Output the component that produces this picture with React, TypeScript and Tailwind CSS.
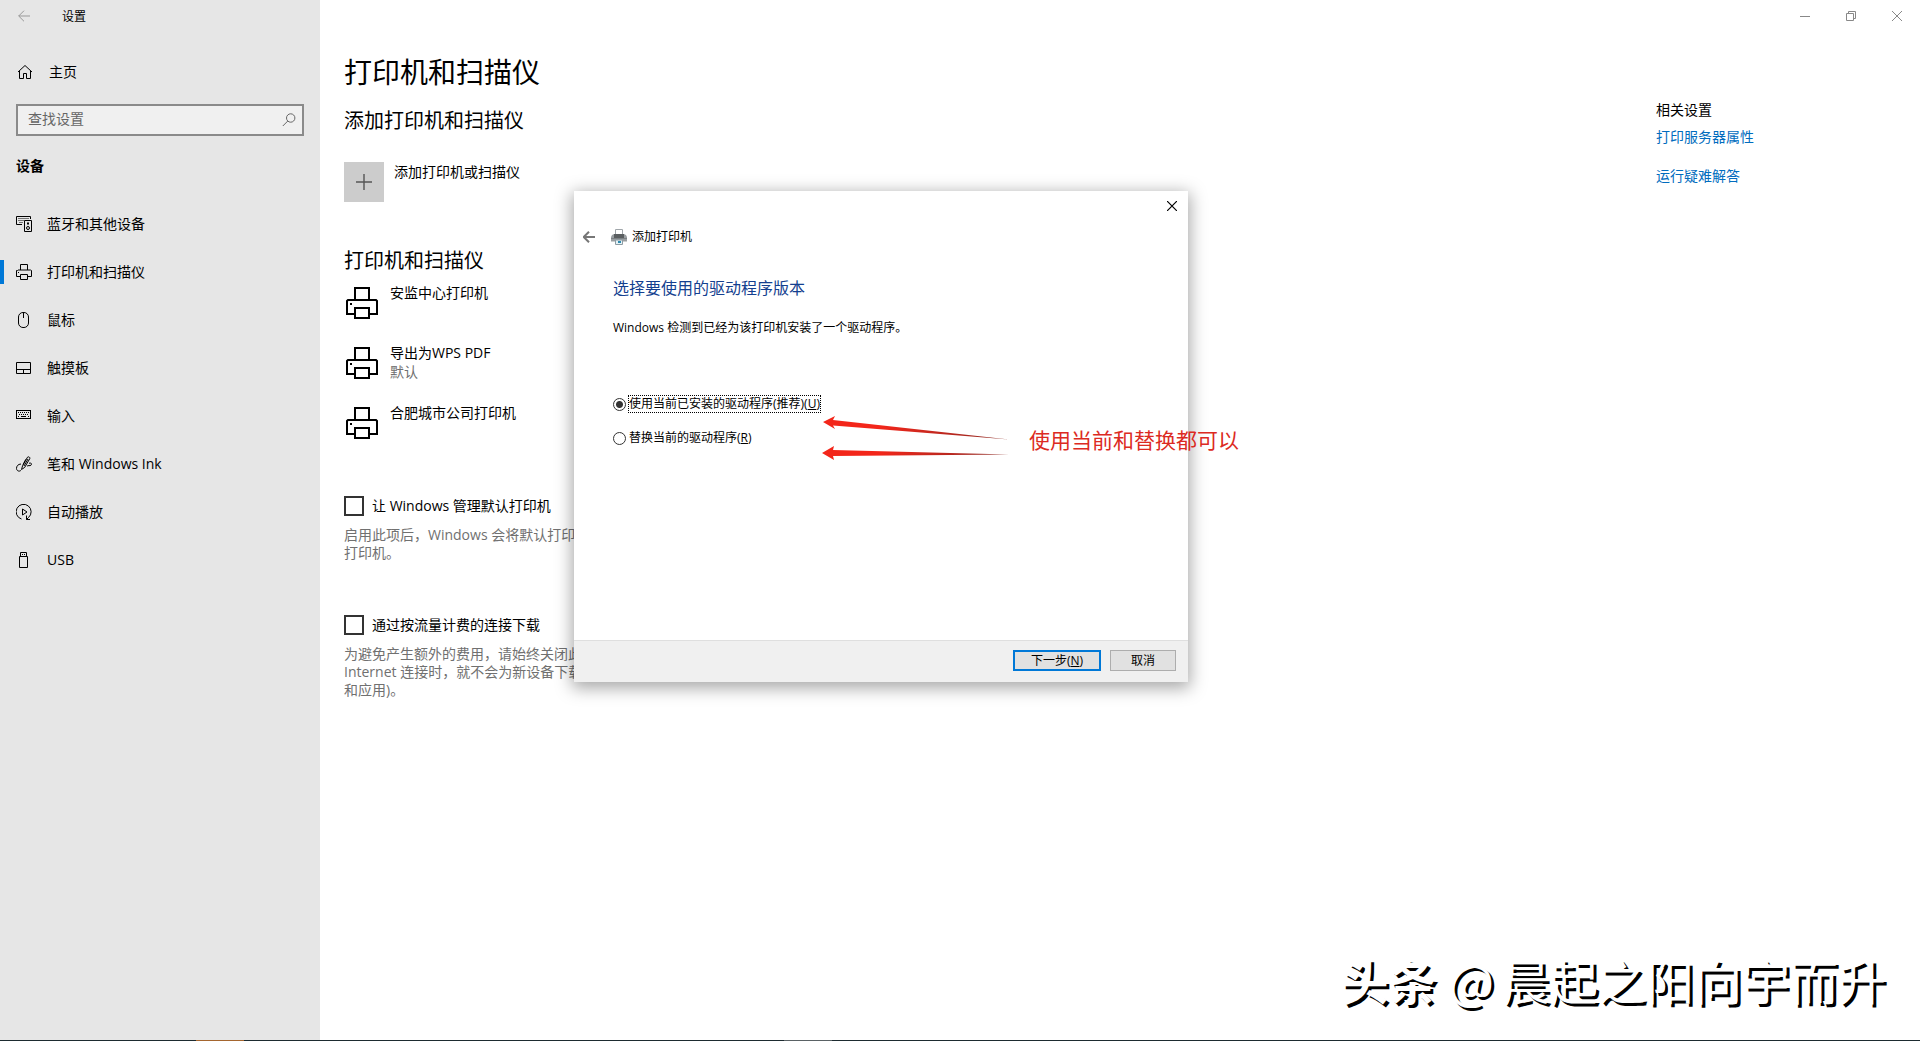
import type { ReactNode } from 'react'

interface NavItem {
  id:      string
  label:   string
  icon:    ReactNode
  active?: boolean
}

interface Printer {
  name:    string
  status?: string
}

const NAV_ITEMS: NavItem[] = [
  { id: 'bluetooth', label: '蓝牙和其他设备', icon: <DevicesIcon /> },
  { id: 'printers',  label: '打印机和扫描仪', icon: <SmallPrinterIcon />, active: true },
  { id: 'mouse',     label: '鼠标', icon: <MouseIcon /> },
  { id: 'touchpad',  label: '触摸板', icon: <TouchpadIcon /> },
  { id: 'typing',    label: '输入', icon: <KeyboardIcon /> },
  { id: 'pen',       label: '笔和 Windows Ink', icon: <PenIcon /> },
  { id: 'autoplay',  label: '自动播放', icon: <AutoplayIcon /> },
  { id: 'usb',       label: 'USB', icon: <UsbIcon /> },
]

const PRINTERS: Printer[] = [
  { name: '安监中心打印机' },
  { name: '导出为WPS PDF', status: '默认' },
  { name: '合肥城市公司打印机' },
]

/* ---------- icons ---------- */

function Icon16({ children }: { children: ReactNode }) {
  return (
    <svg viewBox="0 0 16 16" className="w-4 h-4 shrink-0" fill="none" stroke="currentColor" aria-hidden="true">
      {children}
    </svg>
  )
}

function ArrowIcon({ width = 1 }: { width?: number }) {
  return (
    <svg viewBox="0 0 12 12" className="w-3 h-3" fill="none" stroke="currentColor" strokeWidth={width} aria-hidden="true">
      <path d="M0.7 6H12M6 0.7 0.7 6 6 11.3" />
    </svg>
  )
}

function HomeIcon() {
  return (
    <Icon16>
      <path d="M1 8 8 1.5 15 8M2.5 7V14.5H6.5V9.5H9.5V14.5H13.5V7" />
    </Icon16>
  )
}

function SearchIcon() {
  return (
    <svg viewBox="0 0 14 14" className="w-3.5 h-3.5 shrink-0" fill="none" stroke="currentColor" aria-hidden="true">
      <circle cx="8.7" cy="5" r="4.2" />
      <path d="M5.8 8 0.8 13" />
    </svg>
  )
}

function DevicesIcon() {
  return (
    <Icon16>
      <path d="M6 8.5H0.5V0.5H14.5V3" />
      <path d="M2.5 2.5H13M2.5 4.5H8M3.5 6.5H7" strokeDasharray="1 1" />
      <path d="M8.5 4.5H15.5V15.5H8.5Z" />
      <circle cx="12" cy="12" r="1.5" />
      <path d="M11 7.5H13M12 6V9" />
    </Icon16>
  )
}

function SmallPrinterIcon() {
  return (
    <Icon16>
      <path d="M4.5 6V0.5H11.5V6M4.5 12.5H0.5V6.5H1.5L2 6H14.5L15.5 6.5V12.5H11.5" />
      <path d="M4.5 10.5H11.5V15.5H4.5ZM2 8.5H3" />
    </Icon16>
  )
}

function MouseIcon() {
  return (
    <Icon16>
      <rect x="2.5" y="0.5" width="10" height="15" rx="4.5" />
      <path d="M7.5 0.5V6" />
    </Icon16>
  )
}

function TouchpadIcon() {
  return (
    <Icon16>
      <path d="M0.5 2.5H14.5V13.5H0.5ZM0.5 9.5H14.5M7.5 9.5V13.5" />
    </Icon16>
  )
}

function KeyboardIcon() {
  return (
    <Icon16>
      <rect x="0.5" y="2.5" width="14" height="8" />
      <path d="M2 4.5H13M3 6.5H13" strokeDasharray="1 1" />
      <path d="M2 8.5H3M5 8.5H10M12 8.5H13" />
    </Icon16>
  )
}

function PenIcon() {
  return (
    <Icon16>
      <path d="M5.5 13.5 6.5 10 11.5 1.2C12.3 0.2 14.4 1.3 13.8 2.6L8.7 11.4Z" />
      <path d="M12 3 8 10M9.8 3.3 7 8.5" />
      <path d="M5 8C2 8.2 0.5 10 0.5 12.5C0.6 15 3.5 16 5 14.2" />
      <path d="M13 7.2C15.5 6.6 16 8 15 9.2C14 10.2 12 9 11 10.2" />
    </Icon16>
  )
}

function AutoplayIcon() {
  return (
    <Icon16>
      <path d="M5.5 15A7.5 7.5 0 1 1 12.5 13.5L10.5 15.5M10.5 11.5V15.5H14" />
      <path d="M6.5 5V11L11 8Z" />
    </Icon16>
  )
}

function UsbIcon() {
  return (
    <Icon16>
      <path d="M3.5 4.5H11.5V15.5H3.5ZM4.5 4.5V0.5H10.5V4.5M6 2.5H7M8 2.5H9" />
    </Icon16>
  )
}

function LargePrinterIcon() {
  return (
    <svg viewBox="0 0 32 32" className="w-8 h-8 shrink-0" fill="none" stroke="#000" strokeWidth="2" aria-hidden="true">
      <path d="M9 13V1H23V13" />
      <path d="M9 27H1V14L2 13H30L31 14V27H23" />
      <path d="M9 21H23V31H9Z" />
      <path d="M4 17H6" />
    </svg>
  )
}

function WizardPrinterIcon() {
  return (
    <svg viewBox="0 0 16 16" className="w-4 h-4 shrink-0" aria-hidden="true">
      <path d="M4.5 0.5H11.5V6H4.5Z" fill="#fff" stroke="#a0a6aa" />
      <path d="M1 6 3 5H13L15 6L16 8V12.5H0V8Z" fill="#9a9fa2" />
      <path d="M3 5H13V9H3Z" fill="#5a5e60" />
      <path d="M0 9H16V10H0Z" fill="#7c8184" />
      <path d="M4.5 11H11.5V15.5H4.5Z" fill="#e4f1f6" stroke="#8d9ba2" />
      <path d="M7 12H10V14H7Z" fill="#2e8bb0" />
    </svg>
  )
}

/* ---------- settings window ---------- */

function Sidebar() {
  return (
    <aside className="w-80 shrink-0 bg-[#e6e6e6] text-sm leading-5">
      <div className="flex h-8 items-center">
        <button type="button" aria-label="返回" className="flex w-12 justify-center text-[#999999]">
          <ArrowIcon />
        </button>
        <span className="pt-0.5 pl-3.5 text-xs">设置</span>
      </div>

      <a href="#home" className="mt-4 flex h-12 items-center gap-4 pl-[17px]">
        <HomeIcon />
        主页
      </a>

      <div className="mx-4 mt-2 flex h-8 items-center border-2 border-[#8a8a8a] bg-[#f0f0f0] pl-2.5 pr-1.5 text-[#666666]">
        <input
          type="text"
          aria-label="查找设置"
          placeholder="查找设置"
          className="min-w-0 flex-1 bg-transparent pb-0.5 outline-none placeholder:text-[#666666]"
        />
        <SearchIcon />
      </div>

      <h2 className="mt-5 pl-4 font-bold">设备</h2>

      <nav className="mt-6">
        {NAV_ITEMS.map(item => (
          <a key={item.id} href={`#${item.id}`} className="flex h-12 items-center">
            <span className={item.active ? 'h-6 w-1 bg-[#0078d7]' : 'h-6 w-1'} />
            <span className="flex items-center gap-[15px] pl-3">
              {item.icon}
              {item.label}
            </span>
          </a>
        ))}
      </nav>
    </aside>
  )
}

function WindowButtons() {
  return (
    <div className="flex h-8 justify-end text-[#888888]">
      <button type="button" aria-label="最小化" className="flex w-11.5 items-center justify-center">
        <svg viewBox="0 0 10 10" className="w-2.5 h-2.5" stroke="currentColor" fill="none"><path d="M0 5.5H10" /></svg>
      </button>
      <button type="button" aria-label="还原" className="flex w-11.5 items-center justify-center">
        <svg viewBox="0 0 10 10" className="w-2.5 h-2.5" stroke="currentColor" fill="none">
          <path d="M0.5 2.5H7.5V9.5H0.5ZM2.5 2.5V0.5H9.5V7.5H7.5" />
        </svg>
      </button>
      <button type="button" aria-label="关闭" className="flex w-11.5 items-center justify-center">
        <svg viewBox="0 0 10 10" className="w-2.5 h-2.5" stroke="currentColor" fill="none"><path d="M0 0 10 10M10 0 0 10" /></svg>
      </button>
    </div>
  )
}

function CheckOption({ id, label, children }: { id: string; label: string; children: ReactNode }) {
  return (
    <div>
      <div className="flex items-center gap-2">
        <input id={id} type="checkbox" className="size-5 appearance-none border-2 border-[#333333] bg-white" />
        <label htmlFor={id} className="leading-5">{label}</label>
      </div>
      <p className="mt-2.5 leading-[18px] text-[#707070]">{children}</p>
    </div>
  )
}

function Content() {
  return (
    <main className="flex min-w-0 flex-1 flex-col">
      <WindowButtons />
      <div className="flex justify-between pl-6 text-sm">
        <div className="pt-5">
          <h1 className="text-[28px] leading-10">打印机和扫描仪</h1>
          <h2 className="mt-[15px] text-xl leading-7">添加打印机和扫描仪</h2>

          <button type="button" className="mt-[27px] flex gap-2.5 text-left leading-5">
            <span className="flex size-10 items-center justify-center bg-[#cccccc]">
              <svg viewBox="0 0 16 16" className="w-4 h-4" stroke="#555555" fill="none" aria-hidden="true">
                <path d="M8 0V16M0 8H16" strokeWidth="1.4" />
              </svg>
            </span>
            添加打印机或扫描仪
          </button>

          <h2 className="mt-[45px] text-xl leading-7">打印机和扫描仪</h2>
          <ul className="mt-2">
            {PRINTERS.map(p => (
              <li key={p.name} className="flex h-[60px] gap-3 pt-1 pl-0.5">
                <LargePrinterIcon />
                <div className="-mt-1 leading-5">
                  <p>{p.name}</p>
                  {p.status && <p className="text-[#707070] leading-[18px]">{p.status}</p>}
                </div>
              </li>
            ))}
          </ul>

          <div className="mt-[33px] flex flex-col gap-[53px]">
            <CheckOption id="manage-default" label="让 Windows 管理默认打印机">
              启用此项后，Windows 会将默认打印机设置为最近使用的
              <br />
              打印机。
            </CheckOption>
            <CheckOption id="metered" label="通过按流量计费的连接下载">
              为避免产生额外的费用，请始终关闭此选项。使用按流量计费的
              <br />
              Internet 连接时，就不会为新设备下载软件(驱动程序、信息
              <br />
              和应用)。
            </CheckOption>
          </div>
        </div>

        <aside className="w-66 pt-17 leading-5">
          <h2>相关设置</h2>
          <a href="#server" className="mt-[7px] block text-[#006cbe]">打印服务器属性</a>
          <a href="#troubleshoot" className="mt-[19px] block text-[#006cbe]">运行疑难解答</a>
        </aside>
      </div>
    </main>
  )
}

/* ---------- add printer wizard ---------- */

function DriverDialog() {
  return (
    <section
      role="dialog"
      aria-labelledby="wizard-title"
      className="absolute top-[191px] left-[574px] flex h-[491px] w-[614px] flex-col bg-white text-xs leading-4 shadow-[0_4px_16px_2px_rgba(0,0,0,0.35)]"
    >
      <div className="flex justify-end">
        <button type="button" aria-label="关闭" className="flex h-[30px] w-8 items-center justify-center">
          <svg viewBox="0 0 10 10" className="w-2.5 h-2.5" stroke="#000" strokeWidth="1.2" fill="none"><path d="M0 0 10 10M10 0 0 10" /></svg>
        </button>
      </div>

      <div className="mt-2 flex items-center pl-[9px]">
        <button type="button" aria-label="返回" className="mr-4 text-[#777777]">
          <ArrowIcon width={2} />
        </button>
        <WizardPrinterIcon />
        <h2 id="wizard-title" className="ml-[5px]">添加打印机</h2>
      </div>

      <div className="flex-1 pl-[39px]">
        <h3 className="mt-[31px] text-base leading-6 text-[#143f8f]">选择要使用的驱动程序版本</h3>
        <p className="mt-5">Windows 检测到已经为该打印机安装了一个驱动程序。</p>

        <div className="mt-[59px] flex flex-col items-start gap-[17px]">
          <label className="flex items-center gap-0.5">
            <input
              type="radio"
              name="driver"
              defaultChecked
              className="size-[13px] appearance-none rounded-full border border-[#333333] bg-[radial-gradient(circle,#333333_3px,#ffffff_4px)]"
            />
            <span className="border border-dotted border-black">
              使用当前已安装的驱动程序(推荐)(<u>U</u>)
            </span>
          </label>
          <label className="flex items-center gap-[3px]">
            <input
              type="radio"
              name="driver"
              className="size-[13px] appearance-none rounded-full border border-[#333333] bg-white"
            />
            <span>
              替换当前的驱动程序(<u>R</u>)
            </span>
          </label>
        </div>
      </div>

      <footer className="flex h-[42px] items-center justify-end gap-[9px] border-t border-[#dfdfdf] bg-[#f0f0f0] pr-3 pb-0.5">
        <button type="button" className="flex h-[21px] w-[88px] items-center justify-center border-2 border-[#0078d7] bg-[#e1e1e1]">
          下一步(<u>N</u>)
        </button>
        <button type="button" className="flex h-[21px] w-[66px] items-center justify-center border border-[#adadad] bg-[#e1e1e1]">
          取消
        </button>
      </footer>
    </section>
  )
}

function Annotation() {
  return (
    <div className="absolute top-[415px] left-[822px] flex items-center gap-5">
      <svg viewBox="0 0 187 46" className="h-[46px] w-[187px]" aria-hidden="true">
        <defs>
          <linearGradient id="tail" x1="0" x2="1">
            <stop offset="0.3" stopColor="#f3261a" />
            <stop offset="1" stopColor="#8a2a24" />
          </linearGradient>
        </defs>
        <path d="M1 7 13 1 11 5 187 24.5 11 10.5 13 14Z" fill="url(#tail)" />
        <path d="M0 38 12 31 11 35 187 39.5 11 41 12 45Z" fill="url(#tail)" />
      </svg>
      <span className="pt-1 text-[21px] leading-7 text-[#dc2a22]">使用当前和替换都可以</span>
    </div>
  )
}

export default function App() {
  return (
    <div className="relative flex min-h-screen flex-col overflow-hidden bg-white font-['Open_Sans','Noto_Sans_CJK_SC',sans-serif] text-black">
      <div className="flex flex-1">
        <Sidebar />
        <Content />
      </div>

      {/* top edge of the taskbar */}
      <div className="flex h-px bg-[#1d2b30]">
        <span className="ml-49 w-12 bg-[#a5662f]" />
        <span className="ml-[540px] w-12 bg-[#5a6265]" />
      </div>

      <DriverDialog />
      <Annotation />

      <p className="absolute right-[34px] bottom-[30px] flex font-['Noto_Sans_CJK_SC',sans-serif] text-5xl leading-[64px] text-white [text-shadow:3px_3px_0_#000000]">
        <span className="mr-3 font-bold">头条</span>
        <span className="mr-2">@</span>
        <span>晨起之阳向宇而升</span>
      </p>
    </div>
  )
}
